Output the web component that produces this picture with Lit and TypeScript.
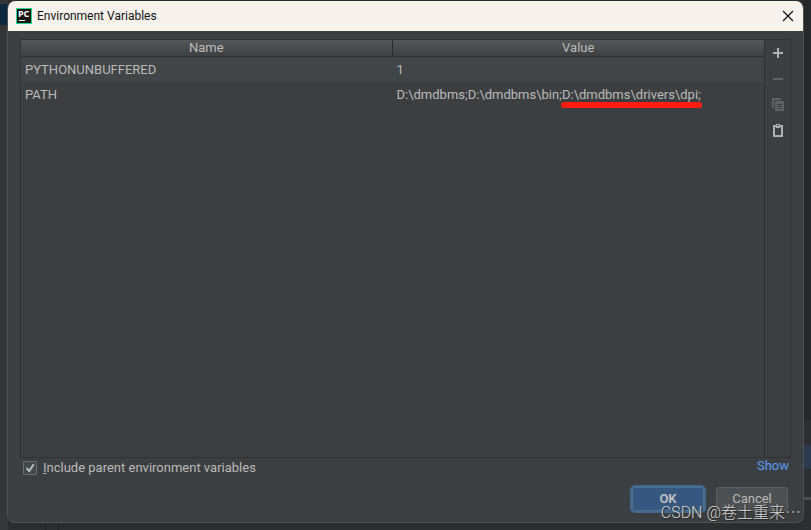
import { LitElement, html, css } from "lit";
import { customElement, state } from "lit/decorators.js";

interface EnvVar {
  name: string;
  value: string;
  marked?: string;
}

@customElement("app-root")
export class AppRoot extends LitElement {
  @state() private includeParent = true;

  private vars: EnvVar[] = [
    { name: "PYTHONUNBUFFERED", value: "1" },
    { name: "PATH", value: "D:\\dmdbms;D:\\dmdbms\\bin;", marked: "D:\\dmdbms\\drivers\\dpi;" },
  ];

  static styles = css`
    :host {
      display: block;
      position: relative;
      box-sizing: border-box;
      height: 100vh;
      padding: 1px 7px 7px;
      overflow: hidden;
      font: 13px/18px Roboto, "Noto Sans CJK SC", sans-serif;
      color: #bbbbbb;
      background: #2c2d2f;
    }
    * {
      box-sizing: border-box;
    }
    .backdrop {
      position: absolute;
      inset: 0;
      background:
        linear-gradient(#0d293e, #0d293e) 0 4px / 8px 21px no-repeat,
        linear-gradient(#1e1f20, #1e1f20) 45px 100% / 1px 8px no-repeat,
        linear-gradient(#1e1f20, #1e1f20) 58px 100% / 1px 8px no-repeat,
        linear-gradient(#2c3a4f, #2c3a4f) 100% 445px / 8px 24px no-repeat,
        linear-gradient(#4a4b4c, #4a4b4c) 100% 497px / 8px 3px no-repeat,
        linear-gradient(#262728, #262728) 100% 0 / 8px 420px no-repeat,
        linear-gradient(#343637, #343637) 0 0 / 8px 100% no-repeat;
    }
    .dialog {
      position: relative;
      display: flex;
      flex-direction: column;
      height: 100%;
      border: 1px solid #4f5254;
      border-top: 0;
      border-radius: 8px;
      overflow: hidden;
      background: #3c3f41;
    }
    .titlebar {
      display: flex;
      align-items: center;
      height: 30px;
      padding: 0 9px 0 8px;
      gap: 5px;
      background: #f7f2ec;
      color: #111111;
      flex: none;
    }
    .title {
      flex: 1;
      margin: 0;
      font-size: 12px;
      font-weight: 400;
    }
    button {
      font: inherit;
      color: inherit;
      padding: 0;
      border: 0;
      background: none;
    }
    svg {
      display: block;
    }
    .body {
      flex: 1;
      display: flex;
      flex-direction: column;
      padding: 8px 12px 9px;
    }
    .panel {
      flex: 1;
      display: flex;
      border: 1px solid #323232;
    }
    .grid {
      flex: 1;
    }
    table {
      width: 100%;
      border-spacing: 0;
      table-layout: fixed;
    }
    th {
      height: 17px;
      padding: 0;
      font-weight: 400;
      line-height: 16px;
      background: linear-gradient(#54585a, #3d4042);
      border-bottom: 1px solid #2e3031;
    }
    th:first-child {
      border-right: 1px solid #2b2d2e;
    }
    td {
      height: 25px;
      padding: 0 4px;
      white-space: nowrap;
    }
    tbody tr:first-child {
      background: #414547;
    }
    .marked {
      position: relative;
    }
    .marked::after {
      content: "";
      position: absolute;
      left: -1px;
      right: -1px;
      bottom: -6px;
      height: 6px;
      border-radius: 3px;
      background: #ff1c10;
    }
    .tools {
      display: flex;
      flex-direction: column;
      align-items: center;
      width: 26px;
      border-left: 1px solid #323232;
    }
    .tool {
      display: grid;
      place-items: center;
      width: 24px;
      height: 26px;
      color: #afb1b3;
    }
    .tool:disabled {
      color: #5f6162;
    }
    .options {
      display: flex;
      justify-content: space-between;
      height: 19px;
      padding: 0 2px 0 3px;
    }
    .check {
      display: flex;
      align-items: center;
      gap: 6px;
    }
    .check input {
      appearance: none;
      width: 14px;
      height: 14px;
      margin: 0;
      border: 1px solid #6b6b6b;
      border-radius: 1px;
      background: #43494a;
    }
    .check input:checked {
      background: #43494a
        url("data:image/svg+xml,%3Csvg xmlns='http://www.w3.org/2000/svg' viewBox='0 0 12 12'%3E%3Cpath d='M2.5 6l2.7 3L9.7 2.2' fill='none' stroke='%23bbbbbb' stroke-width='2'/%3E%3C/svg%3E");
    }
    .show {
      color: #589df6;
      text-decoration: none;
      line-height: 16px;
    }
    .actions {
      display: flex;
      justify-content: flex-end;
      align-items: center;
      gap: 10px;
      padding: 8px 3px 0;
    }
    .btn {
      width: 72px;
      height: 24px;
      border: 1px solid #5e6060;
      border-radius: 3px;
      background: #4c5052;
    }
    .btn.primary {
      width: 76px;
      height: 28px;
      border: 2px solid #43698f;
      border-radius: 5px;
      box-shadow: inset 0 0 0 1px #4c708c;
      background: #365880;
      font-weight: 700;
    }
    .watermark {
      position: absolute;
      right: 10px;
      bottom: 5px;
      font: 300 16px/24px Roboto, "Noto Sans CJK SC", sans-serif;
      color: #d6d7d7;
      text-shadow: 1px 1px 1px #222222;
      white-space: nowrap;
      pointer-events: none;
    }
  `;

  render() {
    return html`
      <div class="backdrop"></div>
      <main class="dialog">
        <header class="titlebar">
          <svg width="16" height="16" viewBox="0 0 16 16" aria-hidden="true">
            <rect width="16" height="16" fill="#21d789" />
            <rect x="1" y="1" width="14" height="14" fill="#151515" />
            <text x="2" y="9" font-family="Noto Sans" font-weight="700" font-size="9" fill="#fff">PC</text>
            <rect x="3" y="12" width="6" height="1" fill="#fff" />
          </svg>
          <h1 class="title">Environment Variables</h1>
          <button aria-label="Close">
            <svg width="12" height="12" viewBox="0 0 12 12">
              <path d="M1 1l10 10M11 1L1 11" stroke="#111" stroke-width="1.2" />
            </svg>
          </button>
        </header>
        <div class="body">
          <div class="panel">
            <div class="grid">
              <table>
                <thead>
                  <tr><th>Name</th><th>Value</th></tr>
                </thead>
                <tbody>
                  ${this.vars.map(
                    (v) => html`<tr>
                      <td>${v.name}</td>
                      <td>${v.value}${v.marked ? html`<span class="marked">${v.marked}</span>` : ""}</td>
                    </tr>`
                  )}
                </tbody>
              </table>
            </div>
            <div class="tools">
              <button class="tool" aria-label="Add">
                <svg width="16" height="16" viewBox="0 0 16 16" fill="currentColor">
                  <path d="M7 3h2v4h4v2H9v4H7V9H3V7h4z" />
                </svg>
              </button>
              <button class="tool" aria-label="Remove" disabled>
                <svg width="16" height="16" viewBox="0 0 16 16" fill="currentColor">
                  <path d="M3 7h10v2H3z" />
                </svg>
              </button>
              <button class="tool" aria-label="Copy" disabled>
                <svg width="16" height="16" viewBox="0 0 16 16" fill="currentColor">
                  <path d="M2 1h9v2H4v8H2z" />
                  <path fill-rule="evenodd" d="M5 4h9v10H5zM7 7v1h5V7zM7 9v1h5V9zM7 11v1h5v-1z" />
                </svg>
              </button>
              <button class="tool" aria-label="Paste">
                <svg width="16" height="16" viewBox="0 0 16 16" fill="currentColor">
                  <path fill-rule="evenodd" d="M3 2h3V1h4v1h3v12H3zM5 4v8h6V4h-1v1H6V4zM7 2v1h2V2z" />
                </svg>
              </button>
            </div>
          </div>
          <div class="options">
            <label class="check">
              <input
                type="checkbox"
                .checked=${this.includeParent}
                @change=${(e: Event) => (this.includeParent = (e.target as HTMLInputElement).checked)}
              />
              <span><u>I</u>nclude parent environment variables</span>
            </label>
            <a class="show" href="#show">Show</a>
          </div>
          <div class="actions">
            <button class="btn primary">OK</button>
            <button class="btn">Cancel</button>
          </div>
        </div>
      </main>
      <div class="watermark">CSDN @卷土重来⋯</div>
    `;
  }
}
